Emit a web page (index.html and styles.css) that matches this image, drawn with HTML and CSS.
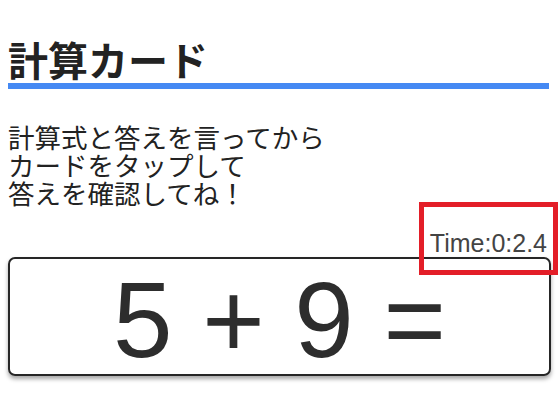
FILE: index.html
```html
<!DOCTYPE html>
<html lang="ja">
<head>
<meta charset="utf-8">
<title>計算カード</title>
<link rel="stylesheet" href="styles.css">
</head>
<body>
<main class="page">
  <h1 class="title">計算カード</h1>
  <p class="lead">計算式と答えを言ってから<br>カードをタップして<br>答えを確認してね！</p>
  <div class="timer">Time:0:2.4</div>
  <div class="card">5 + 9 =</div>
  <div class="highlight"></div>
</main>
</body>
</html>
```

FILE: styles.css
```css
html, body {
  margin: 0;
  padding: 0;
  background: #ffffff;
}

.page {
  position: relative;
  padding: 8px;
  font-family: "Noto Sans CJK JP", "Noto Sans", sans-serif;
  color: #222;
}

.title {
  margin: 0 2px 0 0;
  padding: 29px 0 2px 0;
  font-size: 40px;
  line-height: 44px;
  font-weight: 700;
  color: #222;
  border-bottom: 6px solid #4589f3;
}

.lead {
  margin: 34px 0 0 0;
  font-size: 26.5px;
  line-height: 28px;
  color: #222;
}

.timer {
  margin-top: 23px;
  text-align: right;
  padding-right: 4px;
  font-family: "Liberation Sans", Arial, sans-serif;
  font-size: 25px;
  line-height: 27px;
  color: #444;
}

.card {
  box-sizing: border-box;
  height: 119px;
  padding-top: 6px;
  border: 2px solid #262626;
  border-radius: 7px;
  box-shadow: 0 3px 4px rgba(0, 0, 0, 0.35);
  text-align: center;
  font-family: "Liberation Sans", Arial, sans-serif;
  font-size: 107px;
  line-height: 110px;
  word-spacing: 0;
  color: #2d2d2d;
}

.highlight {
  position: absolute;
  left: 419px;
  top: 202px;
  width: 139px;
  height: 73px;
  box-sizing: border-box;
  border: 5px solid #e31e28;
  pointer-events: none;
}
```
